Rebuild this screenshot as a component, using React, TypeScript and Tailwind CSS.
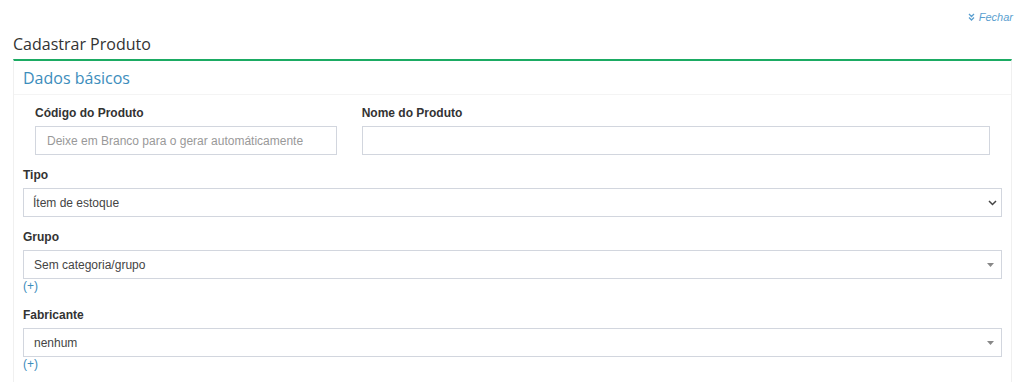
const Caret = () => (
  <svg width="7" height="4" viewBox="0 0 7 4" className="text-[#888]">
    <path d="M0 0 L7 0 L3.5 4 Z" fill="currentColor" />
  </svg>
);

const Chevron = () => (
  <svg width="9" height="6" viewBox="0 0 9 6" fill="none">
    <path d="M1 1 L4.5 4.5 L8 1" stroke="#444" strokeWidth="1.5" />
  </svg>
);

const Label = ({ children }: { children: string }) => (
  <label className="mb-[4px] block text-[12px] leading-[18px] font-bold text-[#333]">
    {children}
  </label>
);

const Select2 = ({ value }: { value: string }) => (
  <div className="flex h-[29px] items-center justify-between border border-[#d2d6de] pr-[7px] pl-[10px] text-[12px] text-[#444]">
    <span>{value}</span>
    <Caret />
  </div>
);

const AddLink = () => (
  <a className="block text-[12px] leading-[15px] text-[#3c8dbc]">(+)</a>
);

export default function App() {
  return (
    <div className="min-h-[382px] bg-white font-['Liberation_Sans',Arial,sans-serif]">
      {/* Fechar */}
      <div className="flex justify-end pt-[10px] pr-[11px]">
        <a className="flex items-center gap-[4px] text-[11px] leading-[14px] text-[#5a9fd0] italic">
          <svg width="7" height="8" viewBox="0 0 7 8" fill="none">
            <path d="M1 1 L3.5 3.5 L6 1 M1 4.5 L3.5 7 L6 4.5" stroke="#5a9fd0" strokeWidth="1.3" />
          </svg>
          Fechar
        </a>
      </div>

      {/* Title */}
      <h1 className="mt-[9px] pl-[13px] font-['Open_Sans',sans-serif] text-[16px] leading-[22px] text-[#333]">
        Cadastrar Produto
      </h1>

      {/* Panel */}
      <div className="mt-[4px] mr-[12px] ml-[13px] border-t-2 border-r border-l border-[#f0f0f0] border-t-[#1bab63] bg-white">
        <div className="flex h-[34px] items-center border-b border-[#f4f4f4] pl-[9px]">
          <h3 className="font-['Open_Sans',sans-serif] text-[16px] leading-[20px] text-[#3c8dbc]">
            Dados básicos
          </h3>
        </div>

        <div className="px-[9px] pt-[9px] pb-[10px]">
          <div className="flex gap-[25px] px-[12px]">
            <div className="w-[302px]">
              <Label>Código do Produto</Label>
              <div className="flex h-[29px] items-center border border-[#d2d6de] pl-[11px] text-[12px] text-[#999]">
                Deixe em Branco para o gerar automáticamente
              </div>
            </div>
            <div className="w-[629px]">
              <Label>Nome do Produto</Label>
              <div className="h-[29px] border border-[#d2d6de]" />
            </div>
          </div>

          <div className="mt-[11px]">
            <Label>Tipo</Label>
            <div className="flex h-[29px] items-center justify-between border border-[#d2d6de] pr-[4px] pl-[9px] text-[12px] text-[#444]">
              <span>Ítem de estoque</span>
              <Chevron />
            </div>
          </div>

          <div className="mt-[11px]">
            <Label>Grupo</Label>
            <Select2 value="Sem categoria/grupo" />
            <AddLink />
          </div>

          <div className="mt-[12px]">
            <Label>Fabricante</Label>
            <Select2 value="nenhum" />
            <AddLink />
          </div>
        </div>
      </div>
    </div>
  );
}
